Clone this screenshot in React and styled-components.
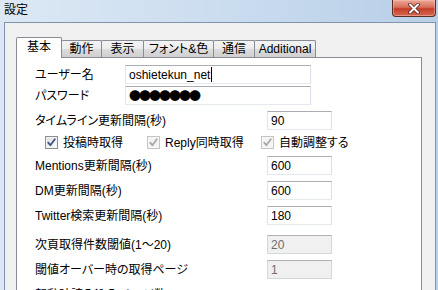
import React from "react";
import styled, { createGlobalStyle } from "styled-components";

const Global = createGlobalStyle`
  html, body { margin: 0; padding: 0; overflow: hidden; background: #c7d9ec; }
  #root { width: 438px; height: 290px; }
`;

const Window = styled.div`
  width: 438px;
  height: 290px;
  overflow: hidden;
  display: flex;
  flex-direction: column;
  background: linear-gradient(90deg, #dce8f4 0%, #cddef0 45%, #b8cfe7 100%);
  font-family: "Liberation Sans", "Noto Sans CJK JP", sans-serif;
  font-feature-settings: "palt";
  color: #000;
`;

const TitleBar = styled.div`
  height: 22px;
  flex: none;
  display: flex;
  align-items: flex-start;
  justify-content: space-between;
  padding-left: 4px;
`;

const Title = styled.div`
  font-size: 12px;
  line-height: 14px;
  margin-top: 3px;
`;

const CloseButton = styled.div`
  box-sizing: border-box;
  width: 44px;
  height: 17px;
  margin-right: 2px;
  border: 1px solid #5e2a22;
  border-top: none;
  border-radius: 0 0 4px 4px;
  background: linear-gradient(#eba996 0%, #d9705b 45%, #c43d27 55%, #d46a54 100%);
  box-shadow: inset 0 0 0 1px rgba(255, 200, 190, 0.45);
  display: flex;
  align-items: center;
  justify-content: center;
`;

const Client = styled.div`
  flex: 1;
  min-height: 0;
  margin: 0 2px 0 4px;
  border: 1px solid #8094ab;
  border-bottom: none;
  background: #f0f0f0;
  padding: 14px 13px 0 11px;
  display: flex;
  flex-direction: column;
`;

const TabStrip = styled.div`
  display: flex;
  align-items: flex-end;
  height: 20px;
  flex: none;
  position: relative;
  z-index: 1;
`;

const Tab = styled.div`
  box-sizing: border-box;
  width: ${(p) => p.$w}px;
  height: ${(p) => (p.$active ? 21 : 17)}px;
  margin-bottom: ${(p) => (p.$active ? -1 : 0)}px;
  margin-left: ${(p) => (p.$first ? 0 : -1)}px;
  position: relative;
  z-index: ${(p) => (p.$active ? 2 : 1)};
  border: 1px solid #898c95;
  border-bottom: none;
  border-radius: 2px 2px 0 0;
  background: ${(p) =>
    p.$active
      ? "#ffffff"
      : "linear-gradient(#f3f3f3 0%, #ebebeb 50%, #dddddd 51%, #cfcfcf 100%)"};
  font-size: 12px;
  line-height: 14px;
  display: flex;
  align-items: center;
  justify-content: center;
  padding-bottom: ${(p) => (p.$active ? 3 : 0)}px;
  white-space: nowrap;
`;

const Panel = styled.div`
  flex: 1;
  background: #ffffff;
  border: 1px solid #898c95;
  border-bottom: none;
  padding: 7px 0 0 18px;
  display: flex;
  flex-direction: column;
`;

const Row = styled.div`
  display: flex;
  align-items: center;
  height: 19px;
  flex: none;
  margin-top: ${(p) => p.$gap || 0}px;
`;

const Label = styled.div`
  width: ${(p) => p.$w}px;
  flex: none;
  font-size: 12px;
  line-height: 14px;
  white-space: nowrap;
`;

const Field = styled.div`
  box-sizing: border-box;
  width: ${(p) => p.$w}px;
  height: 19px;
  flex: none;
  border: 1px solid;
  border-color: ${(p) =>
    p.$disabled ? "#adb2b5 #d5d8db #d5d8db #d5d8db" : "#abadb3 #dbdfe6 #e3e9ef #e2e3ea"};
  background: ${(p) => (p.$disabled ? "#f0f0f0" : "#ffffff")};
  color: ${(p) => (p.$disabled ? "#6d6d6d" : "#000000")};
  padding-left: 3px;
  font-size: 12px;
  line-height: 14px;
  display: flex;
  align-items: center;
  white-space: nowrap;
`;

const Caret = styled.span`
  display: inline-block;
  width: 1px;
  height: 15px;
  background: #000;
  margin-left: 1px;
`;

const Dots = styled.span`
  font-family: "Noto Sans CJK JP", sans-serif;
  font-size: 12px;
  letter-spacing: -2px;
  line-height: 12px;
`;

const CheckRow = styled.div`
  display: flex;
  align-items: center;
  height: 19px;
  flex: none;
  margin-top: ${(p) => p.$gap || 0}px;
  padding-left: 10px;
`;

const CheckItem = styled.div`
  display: flex;
  align-items: center;
  gap: 5px;
  width: ${(p) => (p.$w ? `${p.$w}px` : "auto")};
  flex: none;
  font-size: 12px;
  line-height: 14px;
  white-space: nowrap;
`;

const Box = styled.span`
  box-sizing: border-box;
  width: 13px;
  height: 13px;
  flex: none;
  border: 1px solid ${(p) => (p.$disabled ? "#c4c4c4" : "#8e8f8f")};
  background: ${(p) =>
    p.$disabled
      ? "#f4f4f4"
      : "linear-gradient(135deg, #d9dadb 0%, #f2f2f2 55%, #ffffff 100%)"};
  box-shadow: inset 0 0 0 1px ${(p) => (p.$disabled ? "#f7f7f7" : "#f4f4f4")};
  display: flex;
  align-items: center;
  justify-content: center;
`;

const tabs = [
  { label: "基本", w: 46, active: true },
  { label: "動作", w: 41 },
  { label: "表示", w: 43 },
  { label: "フォント&色", w: 71 },
  { label: "通信", w: 42 },
  { label: "Additional", w: 62 },
];

function Check({ disabled }) {
  return (
    <Box $disabled={disabled}>
      <svg width="9" height="9" viewBox="0 0 9 9">
        <path
          d="M1.2 4.6 L3.4 7.2 L7.8 1.2"
          fill="none"
          stroke={disabled ? "#a9a9a9" : "#3d5586"}
          strokeWidth="1.8"
          strokeLinecap="round"
          strokeLinejoin="round"
        />
      </svg>
    </Box>
  );
}

export default function App() {
  return (
    <Window>
      <Global />
      <TitleBar>
        <Title>設定</Title>
        <CloseButton>
          <svg width="14" height="11" viewBox="0 0 14 11">
            <path d="M3 1.5 L11 9.5 M11 1.5 L3 9.5" stroke="#5a211a" strokeWidth="3.6" strokeLinecap="round" />
            <path d="M3 1.5 L11 9.5 M11 1.5 L3 9.5" stroke="#ffffff" strokeWidth="2" strokeLinecap="round" />
          </svg>
        </CloseButton>
      </TitleBar>
      <Client>
        <TabStrip>
          {tabs.map((t, i) => (
            <Tab key={t.label} $w={t.w} $active={t.active} $first={i === 0}>
              {t.label}
            </Tab>
          ))}
        </TabStrip>
        <Panel>
          <Row>
            <Label $w={90}>ユーザー名</Label>
            <Field $w={186}>
              oshietekun_net
              <Caret />
            </Field>
          </Row>
          <Row $gap={2}>
            <Label $w={90}>パスワード</Label>
            <Field $w={186}>
              <Dots>●●●●●●●</Dots>
            </Field>
          </Row>
          <Row $gap={6}>
            <Label $w={232}>タイムライン更新間隔(秒)</Label>
            <Field $w={65}>90</Field>
          </Row>
          <CheckRow $gap={3}>
            <CheckItem $w={102}>
              <Check />
              投稿時取得
            </CheckItem>
            <CheckItem $w={114}>
              <Check disabled />
              Reply同時取得
            </CheckItem>
            <CheckItem>
              <Check disabled />
              自動調整する
            </CheckItem>
          </CheckRow>
          <Row $gap={4}>
            <Label $w={232}>Mentions更新間隔(秒)</Label>
            <Field $w={65}>600</Field>
          </Row>
          <Row $gap={6}>
            <Label $w={232}>DM更新間隔(秒)</Label>
            <Field $w={65}>600</Field>
          </Row>
          <Row $gap={6}>
            <Label $w={232}>Twitter検索更新間隔(秒)</Label>
            <Field $w={65}>180</Field>
          </Row>
          <Row $gap={10}>
            <Label $w={232}>次頁取得件数閾値(1～20)</Label>
            <Field $w={65} $disabled>20</Field>
          </Row>
          <Row $gap={6}>
            <Label $w={232}>閾値オーバー時の取得ページ</Label>
            <Field $w={65} $disabled>1</Field>
          </Row>
          <Row $gap={6}>
            <Label $w={232}>起動時読み込みページ数</Label>
          </Row>
        </Panel>
      </Client>
    </Window>
  );
}
